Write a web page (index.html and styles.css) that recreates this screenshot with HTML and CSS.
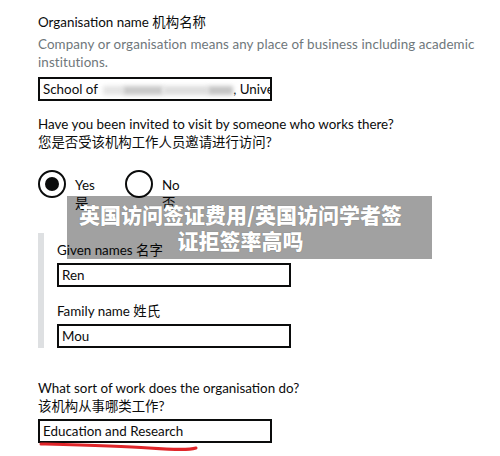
FILE: index.html
```html
<!DOCTYPE html>
<html>
<head>
<meta charset="utf-8">
<link rel="stylesheet" href="styles.css">
</head>
<body>
<div class="page">
  <div class="field">
    <div class="label">Organisation name 机构名称</div>
    <div class="hint">Company or organisation means any place of business including academic institutions.</div>
    <div class="input">School of <span class="blur b1"></span><span class="blur b2"></span><span class="blur b3"></span><span class="blur b4"></span>, Unive</div>
  </div>

  <div class="field q2">
    <div class="label">Have you been invited to visit by someone who works there?<br>您是否受该机构工作人员邀请进行访问?</div>
    <div class="radios">
      <div class="radio-item">
        <span class="radio checked"></span>
        <span class="rtext">Yes<br>是</span>
      </div>
      <div class="radio-item">
        <span class="radio"></span>
        <span class="rtext">No<br>否</span>
      </div>
    </div>
    <div class="conditional">
      <div class="sub">
        <div class="label">Given names 名字</div>
        <div class="input">Ren</div>
      </div>
      <div class="sub">
        <div class="label">Family name 姓氏</div>
        <div class="input">Mou</div>
      </div>
    </div>
  </div>

  <div class="field q3">
    <div class="label">What sort of work does the organisation do?<br>该机构从事哪类工作?</div>
    <div class="input">Education and Research</div>
  </div>
</div>

<div class="banner">英国访问签证费用/英国访问学者签<br>证拒签率高吗</div>

<svg class="scribble" width="170" height="12" viewBox="0 0 170 12">
  <path d="M2 3 C40 4, 80 5, 110 7 S150 9, 157 7" stroke="#e0262a" stroke-width="3" fill="none" stroke-linecap="round"/>
</svg>
</body>
</html>
```

FILE: styles.css
```css
html, body {
  margin: 0;
  padding: 0;
  background: #fff;
}
body {
  font-family: Lato, "Noto Sans CJK SC", sans-serif;
  font-size: 13.4px;
  color: #0b0c0c;
  position: relative;
  width: 500px;
  height: 456px;
  overflow: hidden;
}
.page {
  padding: 13px 0 0 38px;
}
.label {
  line-height: 18px;
}
.hint {
  color: #6f777b;
  line-height: 18px;
  margin-top: 4px;
  width: 450px;
  letter-spacing: 0.1px;
}
.input {
  box-sizing: border-box;
  width: 234px;
  height: 24px;
  border: 2px solid #0b0c0c;
  line-height: 20px;
  padding: 0 3px;
  margin-top: 6px;
  white-space: nowrap;
  overflow: hidden;
}
.blur {
  display: inline-block;
  height: 9px;
  background: #d6d6d6;
  filter: blur(2px);
  vertical-align: middle;
}
.b1 { width: 20px; margin-left: 2px; background: #e4e4e4; }
.b2 { width: 40px; background: #c8c8c8; }
.b3 { width: 45px; background: #dedede; }
.b4 { width: 25px; background: #c4c4c4; }
.q2 {
  margin-top: 14px;
}
.radios {
  display: flex;
  margin-top: 19px;
}
.radio-item {
  display: flex;
  gap: 9px;
  width: 87px;
}
.radio {
  box-sizing: border-box;
  width: 28px;
  height: 28px;
  border: 2px solid #0b0c0c;
  border-radius: 50%;
  position: relative;
  flex: none;
}
.radio.checked::after {
  content: "";
  position: absolute;
  left: 5px;
  top: 5px;
  width: 14px;
  height: 14px;
  border-radius: 50%;
  background: #0b0c0c;
}
.rtext {
  line-height: 18px;
  padding-top: 6px;
}
.conditional {
  margin-top: 21px;
  border-left: 6px solid #dee0e2;
  padding: 8px 0 0 13px;
}
.sub .input {
  margin-top: 4px;
}
.sub + .sub {
  margin-top: 15px;
}
.q3 {
  margin-top: 31px;
}
.q3 .input {
  margin-top: 4px;
}
.banner {
  position: absolute;
  left: 67px;
  top: 196px;
  width: 365px;
  height: 63px;
  background: rgba(0, 0, 0, 0.37);
  color: #fff;
  font-family: "Noto Sans CJK SC", sans-serif;
  font-weight: 900;
  font-size: 21px;
  line-height: 26px;
  text-align: center;
  padding: 5px 18px 0 0;
  box-sizing: border-box;
  text-shadow: 0 0 1px rgba(0, 0, 0, 0.35);
}
.scribble {
  position: absolute;
  left: 39px;
  top: 441px;
}
```
